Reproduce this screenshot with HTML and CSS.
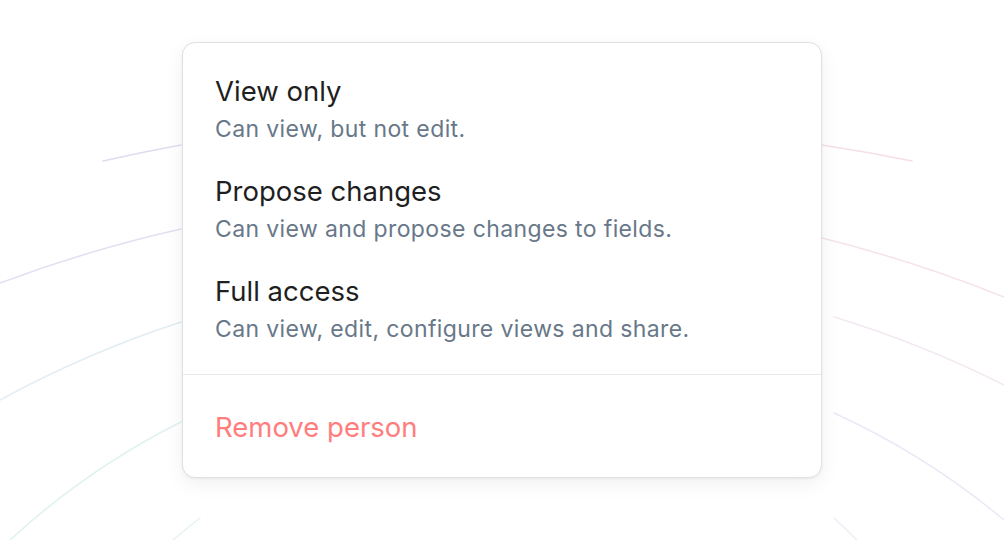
FILE: index.html
```html
<!DOCTYPE html>
<html lang="en">
<head>
<meta charset="utf-8">
<title>Permissions menu</title>
<link rel="stylesheet" href="styles.css">
</head>
<body>
<div class="page">
  <svg class="rings" width="1004" height="540" viewBox="0 0 1004 540" aria-hidden="true">
    <g fill="none" stroke-width="1.5" stroke-linecap="round">
      <path d="M103 161 A1816 1816 0 0 1 181 145" stroke="#e2dbef"/>
      <path d="M822 145 A1816 1816 0 0 1 912 161" stroke="#f6dfe8"/>
      <path d="M0 283 A1376 1376 0 0 1 181 229" stroke="#e4def0"/>
      <path d="M822 238 A1376 1376 0 0 1 1004 297" stroke="#f5e2ec"/>
      <path d="M0 400 A1077 1077 0 0 1 181 322" stroke="#e2edf2"/>
      <path d="M834 317 A1077 1077 0 0 1 1004 385" stroke="#f4e8f2"/>
      <path d="M10 540 A747 747 0 0 1 181 422" stroke="#e0f2f0"/>
      <path d="M834 413 A747 747 0 0 1 1004 520" stroke="#ebe9f6"/>
      <path d="M173 540 A524 524 0 0 1 200 518" stroke="#e4f3f1"/>
      <path d="M834 518 A524 524 0 0 1 857 540" stroke="#eeecf6"/>
    </g>
  </svg>
  <div class="menu" role="menu">
    <div class="options">
      <div class="option" role="menuitem">
        <div class="option-title">View only</div>
        <div class="option-desc">Can view, but not edit.</div>
      </div>
      <div class="option" role="menuitem">
        <div class="option-title">Propose changes</div>
        <div class="option-desc">Can view and propose changes to fields.</div>
      </div>
      <div class="option" role="menuitem">
        <div class="option-title">Full access</div>
        <div class="option-desc">Can view, edit, configure views and share.</div>
      </div>
    </div>
    <div class="menu-footer">
      <div class="remove" role="menuitem">Remove person</div>
    </div>
  </div>
</div>
</body>
</html>
```
FILE: styles.css
```css
* { box-sizing: border-box; }

html, body {
  margin: 0;
  padding: 0;
  background: #ffffff;
}

body {
  font-family: Inter, "Noto Sans", "Liberation Sans", sans-serif;
  -webkit-font-smoothing: antialiased;
}

.page {
  position: relative;
  width: 1004px;
  height: 540px;
  overflow: hidden;
  display: flex;
  justify-content: center;
  align-items: flex-start;
  padding-top: 42px;
}

.rings {
  position: absolute;
  left: 0;
  top: 0;
}

.menu {
  position: relative;
  z-index: 1;
  width: 640px;
  height: 436px;
  background: #ffffff;
  border: 1px solid #e0e0e2;
  border-radius: 13px;
  box-shadow: 0 1px 3px rgba(0, 0, 0, 0.05), 0 6px 20px rgba(0, 0, 0, 0.06);
  display: flex;
  flex-direction: column;
}

.options {
  display: flex;
  flex-direction: column;
  gap: 24px;
  padding: 30px 32px 25px;
  border-bottom: 1px solid #e6e9ee;
}

.option-title {
  font-size: 27.5px;
  line-height: 36px;
  color: #1f1f1f;
}

.option-desc {
  font-size: 23px;
  line-height: 40px;
  letter-spacing: 0.38px;
  color: #687889;
}

.menu-footer {
  padding: 34px 32px 0;
}

.remove {
  font-size: 27.5px;
  line-height: 36px;
  color: #ff7d7d;
}
```
